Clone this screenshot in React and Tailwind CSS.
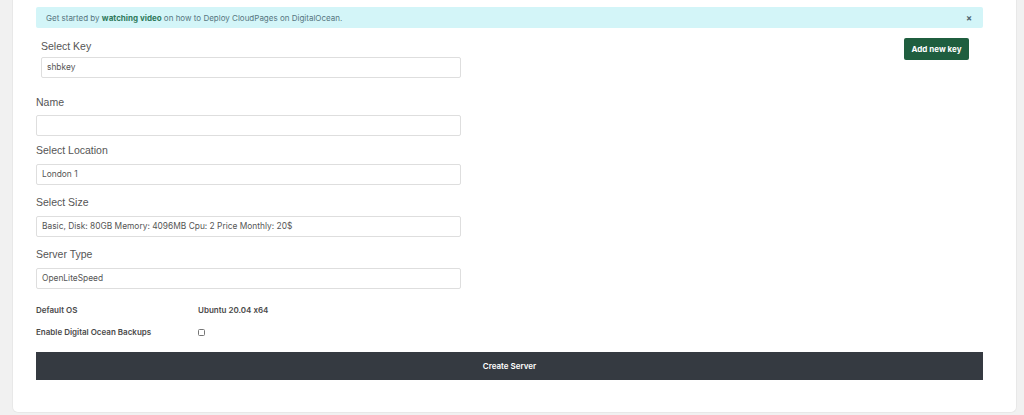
import React from "react";

const fields = [
  { label: "Name", value: "", wrap: "mt-[17px]", gap: "mt-[6px]" },
  { label: "Select Location", value: "London 1", wrap: "mt-[7px]", gap: "mt-[7px]" },
  { label: "Select Size", value: "Basic, Disk: 80GB Memory: 4096MB Cpu: 2 Price Monthly: 20$", wrap: "mt-[10px]", gap: "mt-[7px]" },
  { label: "Server Type", value: "OpenLiteSpeed", wrap: "mt-[10px]", gap: "mt-[7px]" },
];

const Field = ({ label, value, className = "", gap }) => (
  <div className={className}>
    <div className="text-[10.5px] leading-[14px] text-[#555555] font-['Liberation_Sans',Arial,sans-serif]">{label}</div>
    <div className={`${gap} h-[21px] border border-[#dedede] rounded-[2px] bg-white flex items-center px-[5px] text-[8.4px] text-[#555555] font-['Inter',sans-serif]`}>
      {value}
    </div>
  </div>
);

export default function App() {
  return (
    <div className="w-[1024px] h-[415px] bg-[#f1f1f1] pl-[12px] pr-[7px] overflow-hidden">
      <div className="h-[413px] bg-white rounded-b-[6px] border-x border-b border-[#e8e8e8] pl-[23px] pr-[33px] pt-[7px] font-['Inter',sans-serif] [font-feature-settings:'calt'_0]">
        <div className="h-[21px] bg-[#d3f5f8] rounded-[2px] flex items-center justify-between pl-[10px] pr-[11px] text-[8px] text-[#567680]">
          <span>
            Get started by <span className="font-bold text-[#2f7b5c]">watching video</span> on how to Deploy CloudPages on DigitalOcean.
          </span>
          <span className="font-bold text-[9px] text-[#4f6670]">×</span>
        </div>

        <div className="flex justify-between">
          <Field className="ml-[5px] mt-[11px] w-[420px]" gap="mt-[4px]" label="Select Key" value="shbkey" />
          <button className="mt-[10px] mr-[14px] h-[22px] w-[65px] bg-[#1f5e3f] rounded-[2px] text-white text-[8px] font-bold">
            Add new key
          </button>
        </div>

        {fields.map((f) => (
          <Field key={f.label} className={`w-[425px] ${f.wrap}`} gap={f.gap} label={f.label} value={f.value} />
        ))}

        <div className="mt-[15px] flex items-center h-[12px] text-[8px] font-semibold text-[#4a4a4a]">
          <span className="w-[162px]">Default OS</span>
          <span>Ubuntu 20.04 x64</span>
        </div>
        <div className="mt-[10px] flex items-center h-[12px] text-[8px] font-semibold text-[#4a4a4a]">
          <span className="w-[162px]">Enable Digital Ocean Backups</span>
          <span className="w-[7px] h-[7px] border border-[#767676] rounded-[1.5px] bg-white" />
        </div>

        <button className="mt-[14px] w-full h-[28px] bg-[#353a41] text-white text-[8px] font-semibold">
          Create Server
        </button>
      </div>
    </div>
  );
}
